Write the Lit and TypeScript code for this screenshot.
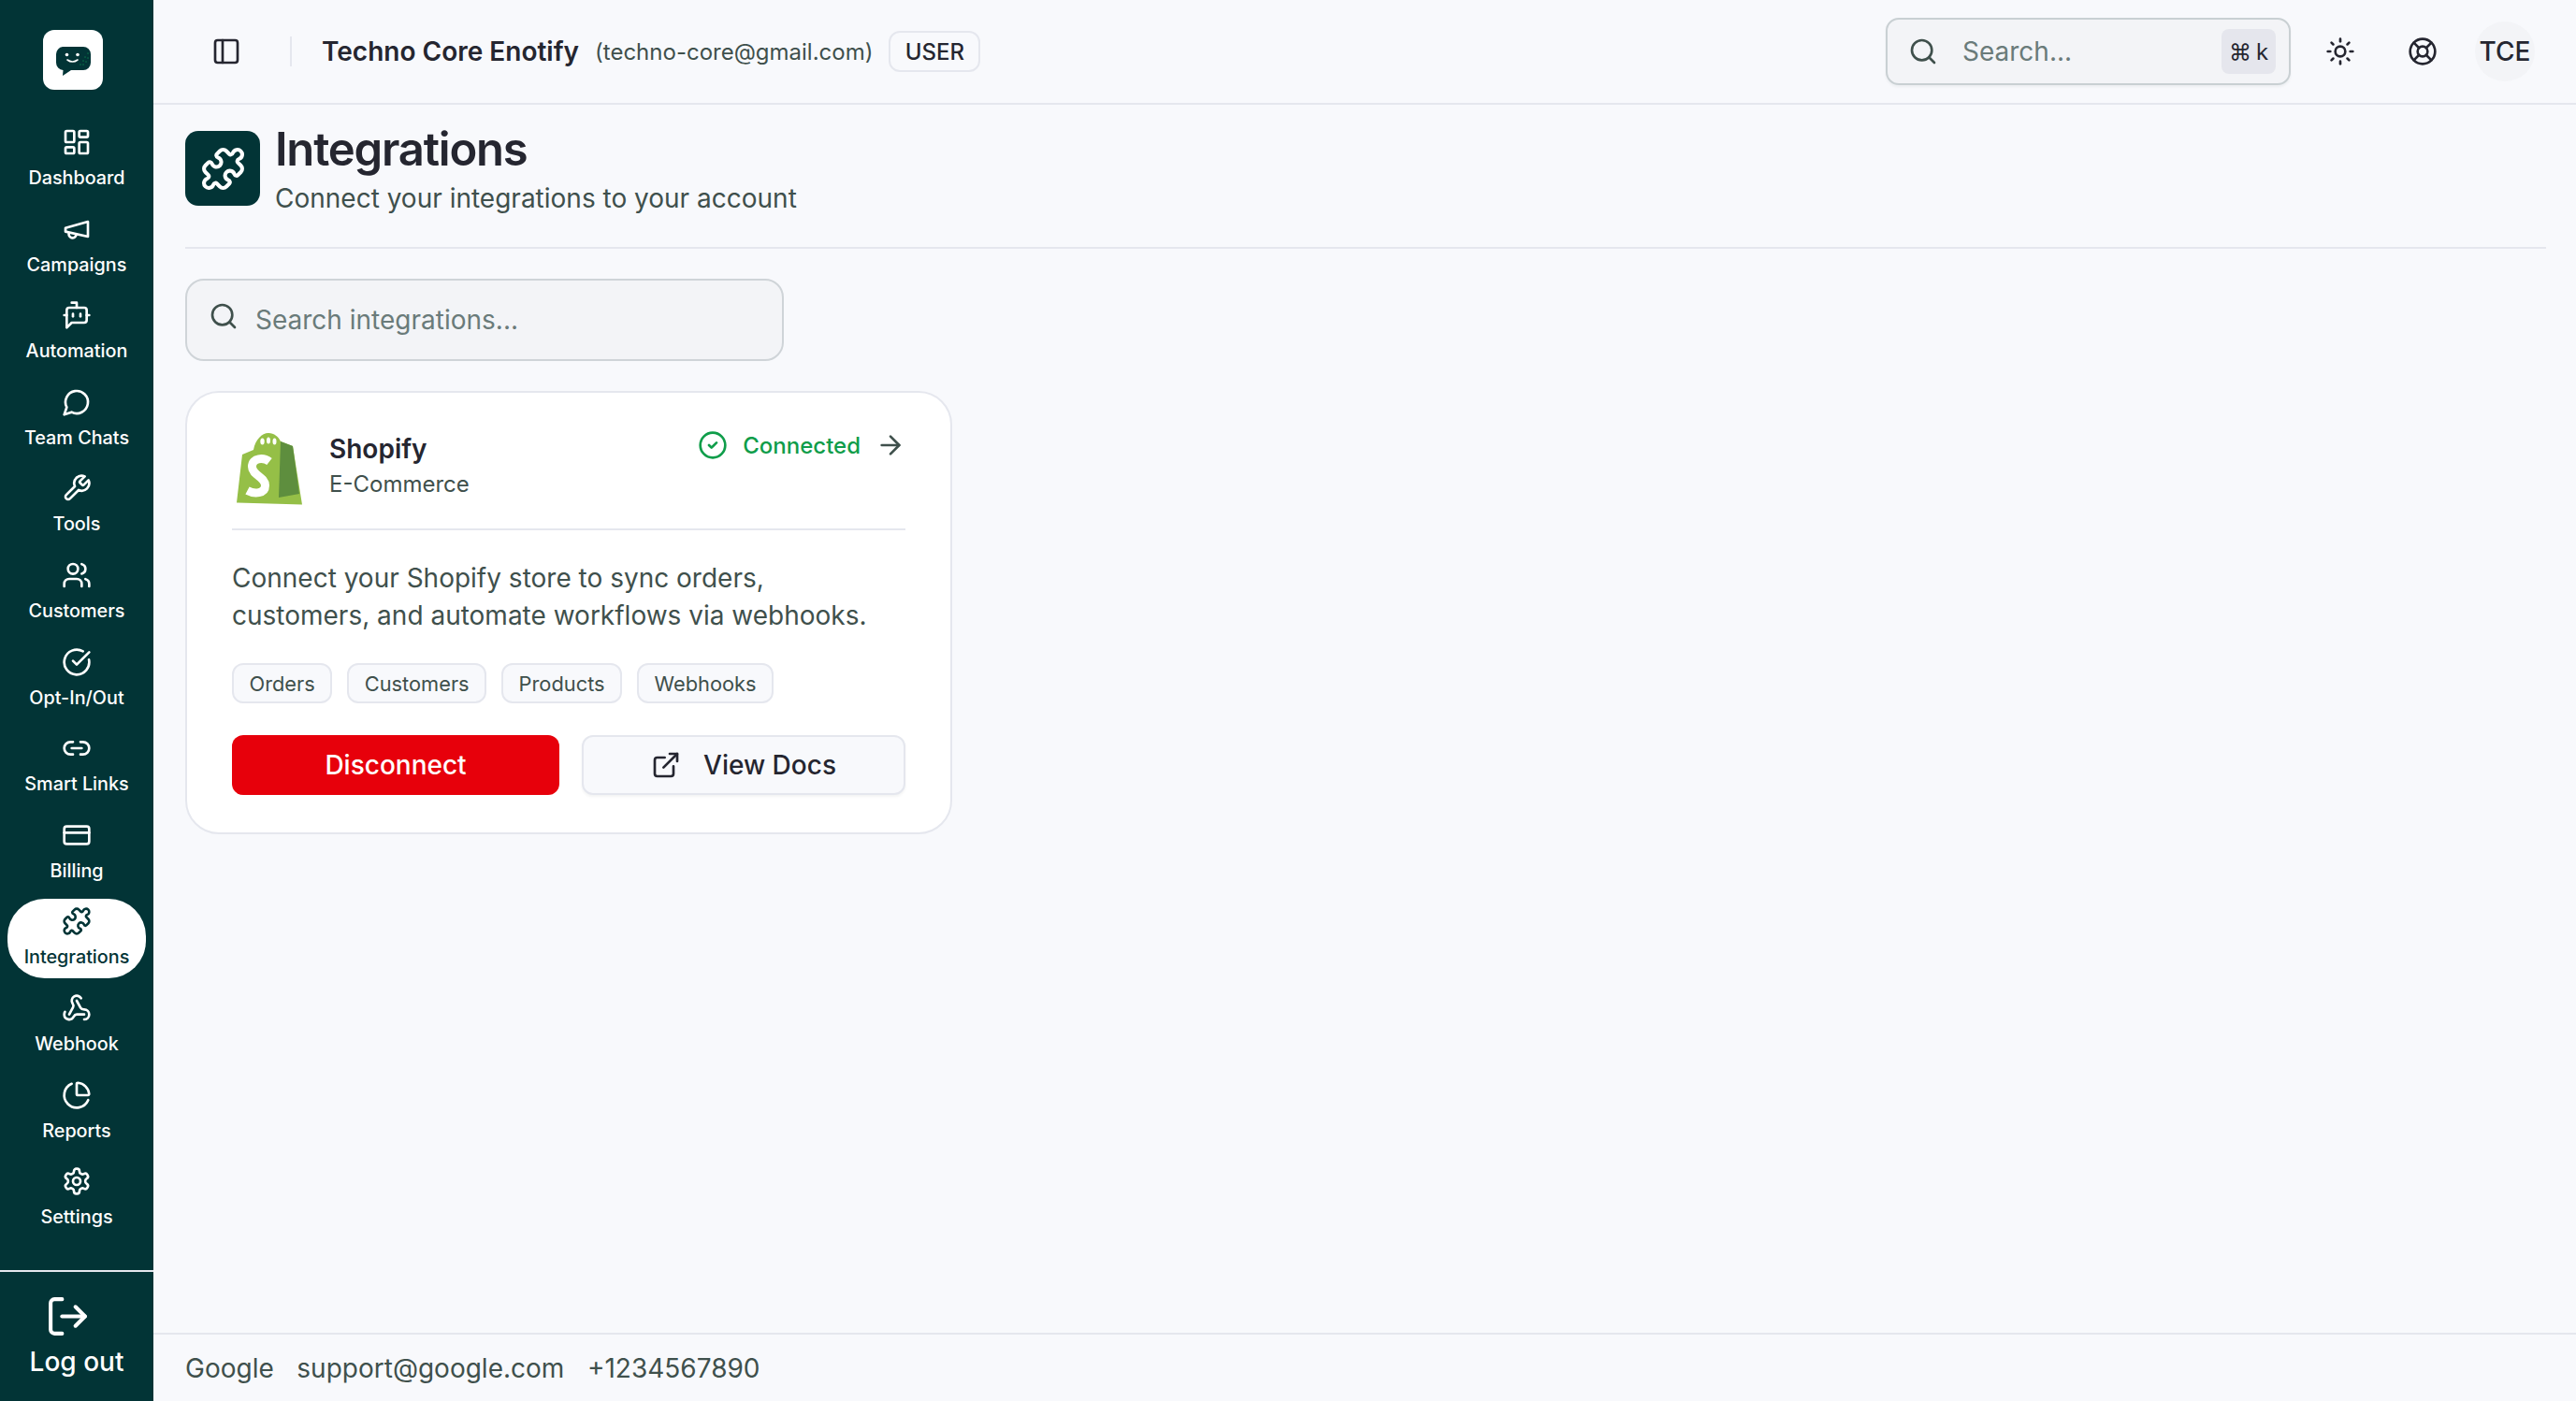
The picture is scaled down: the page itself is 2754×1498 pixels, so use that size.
import { css, html, LitElement, svg } from 'lit';
import { customElement } from 'lit/decorators.js';

// lucide paths, stroke only
const ICONS = {
  dashboard: svg`<rect x="3" y="3" width="7" height="9" rx="1"/><rect x="14" y="3" width="7" height="5" rx="1"/><rect x="14" y="12" width="7" height="9" rx="1"/><rect x="3" y="16" width="7" height="5" rx="1"/>`,
  megaphone: svg`<path d="m3 11 18-5v12L3 14v-3z"/><path d="M11.6 16.8a3 3 0 1 1-5.8-1.6"/>`,
  bot: svg`<path d="M12 6V2H8"/><path d="m8 18-4 4V8a2 2 0 0 1 2-2h12a2 2 0 0 1 2 2v8a2 2 0 0 1-2 2Z"/><path d="M2 12h2"/><path d="M9 11v2"/><path d="M15 11v2"/><path d="M20 12h2"/>`,
  chat: svg`<path d="M7.9 20A9 9 0 1 0 4 16.1L2 22Z"/>`,
  wrench: svg`<path d="M14.7 6.3a1 1 0 0 0 0 1.4l1.6 1.6a1 1 0 0 0 1.4 0l3.77-3.77a6 6 0 0 1-7.94 7.94l-6.91 6.91a2.12 2.12 0 0 1-3-3l6.91-6.91a6 6 0 0 1 7.94-7.94l-3.76 3.76z"/>`,
  users: svg`<path d="M16 21v-2a4 4 0 0 0-4-4H6a4 4 0 0 0-4 4v2"/><circle cx="9" cy="7" r="4"/><path d="M22 21v-2a4 4 0 0 0-3-3.87"/><path d="M16 3.13a4 4 0 0 1 0 7.75"/>`,
  optin: svg`<path d="M21.801 10A10 10 0 1 1 17 3.335"/><path d="m9 11 3 3L22 4"/>`,
  link: svg`<path d="M9 17H7A5 5 0 0 1 7 7h2"/><path d="M15 7h2a5 5 0 1 1 0 10h-2"/><line x1="8" x2="16" y1="12" y2="12"/>`,
  card: svg`<rect width="20" height="14" x="2" y="5" rx="2"/><line x1="2" x2="22" y1="10" y2="10"/>`,
  puzzle: svg`<path d="M19.439 7.85c-.049.322.059.648.289.878l1.568 1.568c.47.47.706 1.087.706 1.704s-.235 1.233-.706 1.704l-1.611 1.611a.98.98 0 0 1-.837.276c-.47-.07-.802-.48-.968-.925a2.501 2.501 0 1 0-3.214 3.214c.446.166.855.497.925.968a.979.979 0 0 1-.276.837l-1.61 1.61a2.404 2.404 0 0 1-1.705.707 2.402 2.402 0 0 1-1.704-.706l-1.568-1.568a1.026 1.026 0 0 0-.877-.29c-.493.074-.84.504-1.02.968a2.5 2.5 0 1 1-3.237-3.237c.464-.18.894-.527.967-1.02a1.026 1.026 0 0 0-.289-.877l-1.568-1.568A2.402 2.402 0 0 1 1.998 12c0-.617.236-1.234.706-1.704L4.23 8.77c.24-.24.581-.353.917-.303.515.077.877.528 1.073 1.01a2.5 2.5 0 1 0 3.259-3.259c-.482-.196-.933-.558-1.01-1.073-.05-.336.062-.676.303-.917l1.525-1.525A2.402 2.402 0 0 1 12 1.998c.617 0 1.234.236 1.704.706l1.568 1.568c.23.23.556.338.877.29.493-.074.84-.504 1.02-.968a2.5 2.5 0 1 1 3.237 3.237c-.464.18-.894.527-.967 1.02Z"/>`,
  webhook: svg`<path d="M18 16.98h-5.99c-1.1 0-1.95.94-2.48 1.9A4 4 0 0 1 2 17c.01-.7.2-1.4.57-2"/><path d="m6 17 3.13-5.78c.53-.97.1-2.18-.5-3.1a4 4 0 1 1 6.89-4.06"/><path d="m12 6 3.13 5.73C15.66 12.7 16.9 13 18 13a4 4 0 0 1 0 8"/>`,
  pie: svg`<path d="M21 12c.552 0 1.005-.449.95-.998a10 10 0 0 0-8.953-8.951c-.55-.055-.998.398-.998.95v8a1 1 0 0 0 1 1z"/><path d="M21.21 15.89A10 10 0 1 1 8 2.83"/>`,
  settings: svg`<path d="M12.22 2h-.44a2 2 0 0 0-2 2v.18a2 2 0 0 1-1 1.73l-.43.25a2 2 0 0 1-2 0l-.15-.08a2 2 0 0 0-2.73.73l-.22.38a2 2 0 0 0 .73 2.73l.15.1a2 2 0 0 1 1 1.72v.51a2 2 0 0 1-1 1.74l-.15.09a2 2 0 0 0-.73 2.73l.22.38a2 2 0 0 0 2.73.73l.15-.08a2 2 0 0 1 2 0l.43.25a2 2 0 0 1 1 1.73V20a2 2 0 0 0 2 2h.44a2 2 0 0 0 2-2v-.18a2 2 0 0 1 1-1.73l.43-.25a2 2 0 0 1 2 0l.15.08a2 2 0 0 0 2.73-.73l.22-.39a2 2 0 0 0-.73-2.73l-.15-.08a2 2 0 0 1-1-1.74v-.5a2 2 0 0 1 1-1.74l.15-.09a2 2 0 0 0 .73-2.73l-.22-.38a2 2 0 0 0-2.73-.73l-.15.08a2 2 0 0 1-2 0l-.43-.25a2 2 0 0 1-1-1.73V4a2 2 0 0 0-2-2z"/><circle cx="12" cy="12" r="3"/>`,
  logout: svg`<path d="M9 21H5a2 2 0 0 1-2-2V5a2 2 0 0 1 2-2h4"/><polyline points="16 17 21 12 16 7"/><line x1="21" x2="9" y1="12" y2="12"/>`,
  panel: svg`<rect width="18" height="18" x="3" y="3" rx="2"/><path d="M9 3v18"/>`,
  search: svg`<circle cx="11" cy="11" r="8"/><path d="m21 21-4.3-4.3"/>`,
  sun: svg`<circle cx="12" cy="12" r="4"/><path d="M12 2v2"/><path d="M12 20v2"/><path d="m4.93 4.93 1.41 1.41"/><path d="m17.66 17.66 1.41 1.41"/><path d="M2 12h2"/><path d="M20 12h2"/><path d="m6.34 17.66-1.41 1.41"/><path d="m19.07 4.93-1.41 1.41"/>`,
  buoy: svg`<circle cx="12" cy="12" r="10"/><path d="m4.93 4.93 4.24 4.24"/><path d="m14.83 9.17 4.24-4.24"/><path d="m14.83 14.83 4.24 4.24"/><path d="m9.17 14.83-4.24 4.24"/><circle cx="12" cy="12" r="4"/>`,
  check: svg`<circle cx="12" cy="12" r="10"/><path d="m9 12 2 2 4-4"/>`,
  arrow: svg`<path d="M5 12h14"/><path d="m12 5 7 7-7 7"/>`,
  external: svg`<path d="M15 3h6v6"/><path d="M10 14 21 3"/><path d="M18 13v6a2 2 0 0 1-2 2H5a2 2 0 0 1-2-2V8a2 2 0 0 1 2-2h6"/>`,
};

type IconName = keyof typeof ICONS;

const icon = (name: IconName, cls = '') => html`<svg
  class="icon ${cls}"
  viewBox="0 0 24 24"
  fill="none"
  stroke="currentColor"
  stroke-width="2"
  stroke-linecap="round"
  stroke-linejoin="round"
  aria-hidden="true"
>${ICONS[name]}</svg>`;

const NAV: { label: string; icon: IconName; active?: boolean }[] = [
  { label: 'Dashboard', icon: 'dashboard' },
  { label: 'Campaigns', icon: 'megaphone' },
  { label: 'Automation', icon: 'bot' },
  { label: 'Team Chats', icon: 'chat' },
  { label: 'Tools', icon: 'wrench' },
  { label: 'Customers', icon: 'users' },
  { label: 'Opt-In/Out', icon: 'optin' },
  { label: 'Smart Links', icon: 'link' },
  { label: 'Billing', icon: 'card' },
  { label: 'Integrations', icon: 'puzzle', active: true },
  { label: 'Webhook', icon: 'webhook' },
  { label: 'Reports', icon: 'pie' },
  { label: 'Settings', icon: 'settings' },
];

const TAGS = ['Orders', 'Customers', 'Products', 'Webhooks'];

@customElement('app-root')
export class AppRoot extends LitElement {
  static override styles = css`
    :host {
      display: flex;
      height: 100vh;
      background: #f8f9fc;
      color: #252630;
      font-family: Inter, 'Liberation Sans', sans-serif;
      overflow: hidden;
    }
    * {
      box-sizing: border-box;
    }
    .icon {
      display: block;
      width: 32px;
      height: 32px;
      flex: none;
    }

    /* sidebar */
    .sidebar {
      width: 164px;
      flex: none;
      display: flex;
      flex-direction: column;
      background: #023436;
      color: #fff;
    }
    .logo {
      display: block;
      width: 64px;
      height: 64px;
      margin: 32px auto 32px 46px;
    }
    .nav {
      display: flex;
      flex-direction: column;
      gap: 8.1px;
      padding: 0 8px;
    }
    .nav-item {
      height: 84.5px;
      display: flex;
      flex-direction: column;
      align-items: center;
      gap: 8px;
      padding-top: 8px;
      border-radius: 40px;
      font-size: 19.8px;
      font-weight: 500;
      line-height: 28px;
      white-space: nowrap;
    }
    .nav-item.active {
      background: #fff;
      color: #023436;
    }
    .logout {
      margin-top: auto;
      height: 140px;
      border-top: 2px solid #e5e7ee;
      display: flex;
      flex-direction: column;
      align-items: center;
      padding-top: 23px;
      font-size: 28px;
      font-weight: 500;
      line-height: 36px;
      gap: 6px;
    }
    .logout .icon {
      width: 49px;
      height: 49px;
      margin-right: 20px;
    }

    /* main column */
    .main {
      flex: 1;
      min-width: 0;
      display: flex;
      flex-direction: column;
    }
    .topbar {
      height: 112px;
      flex: none;
      display: flex;
      align-items: center;
      border-bottom: 2px solid #e5e7ee;
      padding: 0 44px 0 62px;
    }
    .panel-toggle {
      width: 32px;
      height: 32px;
      color: #252630;
    }
    .vr {
      width: 2px;
      height: 32px;
      background: #e5e7ee;
      margin: 0 32px 0 52px;
    }
    .account {
      font-size: 28px;
      font-weight: 600;
      white-space: nowrap;
    }
    .email {
      font-size: 24px;
      color: #3f504c;
      margin-left: 17px;
      white-space: nowrap;
    }
    .role {
      margin-left: 17px;
      height: 44px;
      width: 98px;
      display: flex;
      align-items: center;
      justify-content: center;
      border: 2px solid #e5e7ee;
      border-radius: 12px;
      font-size: 24px;
      font-weight: 500;
    }
    .global-search {
      margin-left: auto;
      width: 433px;
      height: 72px;
      display: flex;
      align-items: center;
      padding: 0 14px 0 22px;
      background: #f3f4f7;
      border: 2px solid #c9d0d3;
      border-radius: 14px;
      box-shadow: 0 2px 3px rgba(20, 30, 40, 0.05);
      font-size: 28px;
      color: #6a7b7a;
    }
    .global-search .icon {
      color: #3f504c;
      margin-right: 26px;
    }
    .kbd {
      margin-left: auto;
      width: 58px;
      height: 48px;
      display: flex;
      align-items: center;
      justify-content: center;
      gap: 5px;
      background: #e5e6ed;
      border-radius: 8px;
      color: #252630;
      font-size: 24px;
    }
    .top-btn {
      margin-left: 37px;
      color: #252630;
    }
    .top-btn + .top-btn {
      margin-left: 56px;
    }
    .avatar {
      margin-left: 40px;
      width: 64px;
      height: 64px;
      border-radius: 50%;
      background: #f3f4f7;
      display: flex;
      align-items: center;
      justify-content: center;
      font-size: 28px;
      font-weight: 500;
    }

    .content {
      flex: 1;
      padding: 28px 32px 0 34px;
    }
    .page-head {
      display: flex;
      gap: 16px;
      height: 126px;
      border-bottom: 2px solid #e5e7ee;
    }
    .tile {
      width: 80px;
      height: 80px;
      border-radius: 14px;
      background: #023436;
      color: #fff;
      display: flex;
      align-items: center;
      justify-content: center;
    }
    .tile .icon {
      width: 49px;
      height: 49px;
    }
    .titles {
      margin-top: -6px;
    }
    h1 {
      margin: 0;
      font-size: 49px;
      font-weight: 600;
      line-height: 52px;
      letter-spacing: -1.2px;
    }
    .subtitle {
      margin-top: 2px;
      font-size: 28px;
      line-height: 48px;
      color: #3f504c;
    }
    .filter {
      margin-top: 32px;
      width: 640px;
      height: 88px;
      display: flex;
      align-items: center;
      gap: 18px;
      padding: 0 23px;
      background: #f3f4f7;
      border: 2px solid #cfd4d8;
      border-radius: 20px;
      font-size: 28px;
      color: #6a7b7a;
    }
    .filter .icon {
      color: #3f504c;
      margin-top: -8px;
    }

    /* integration card */
    .card {
      margin-top: 32px;
      width: 820px;
      height: 474px;
      padding: 42px 48px 0;
      background: #fff;
      border: 2px solid #e5e7ee;
      border-radius: 36px;
      display: flex;
      flex-direction: column;
    }
    .card-head {
      display: flex;
      height: 105px;
      border-bottom: 2px solid #e5e7ee;
    }
    .brand {
      width: 120px;
      height: 110px;
      margin: -22px 2px 0 -18px;
      flex: none;
    }
    .brand-text {
      margin-top: -2px;
    }
    .name {
      font-size: 28px;
      font-weight: 600;
      line-height: 40px;
    }
    .kind {
      font-size: 24px;
      line-height: 35px;
      color: #3f504c;
    }
    .status {
      margin-left: auto;
      display: flex;
      align-items: center;
      align-self: flex-start;
      height: 32px;
      margin-top: -2px;
      color: #0f9d4a;
      font-size: 24px;
      font-weight: 500;
    }
    .status .arrow {
      color: #3f504c;
      margin-left: 16px;
    }
    .status .check {
      margin-right: 16px;
    }
    .desc {
      margin: 31px 0 0;
      font-size: 28px;
      line-height: 40px;
      color: #3f504c;
    }
    .tags {
      display: flex;
      gap: 16px;
      margin-top: 31px;
    }
    .tag {
      height: 43px;
      display: flex;
      align-items: center;
      padding: 0 16.5px;
      background: #f8f9fc;
      border: 2px solid #e5e7ee;
      border-radius: 12px;
      font-size: 21.8px;
      color: #3f504c;
    }
    .actions {
      display: flex;
      gap: 24px;
      margin-top: 34px;
    }
    .btn {
      height: 64px;
      display: flex;
      align-items: center;
      justify-content: center;
      border-radius: 12px;
      font-size: 28px;
      font-weight: 500;
    }
    .btn.danger {
      width: 350px;
      background: #e7000b;
      color: #fff;
    }
    .btn.outline {
      flex: 1;
      gap: 24px;
      background: #f8f9fc;
      border: 2px solid #e5e7ee;
      box-shadow: 0 2px 3px rgba(20, 30, 40, 0.05);
      color: #252630;
    }

    .footer {
      height: 73px;
      flex: none;
      display: flex;
      align-items: center;
      gap: 24.6px;
      padding: 0 34px;
      border-top: 2px solid #e5e7ee;
      font-size: 28px;
      color: #3f504c;
    }
  `;

  override render() {
    return html`
      <aside class="sidebar">
        <svg class="logo" viewBox="0 0 64 64" aria-hidden="true">
          <rect width="64" height="64" rx="12" fill="#fff" />
          <path
            d="M21 18h22a8 8 0 0 1 8 8v9a8 8 0 0 1-8 8H30l-9 6 .5-6A8 8 0 0 1 14 35v-9a8 8 0 0 1 7-8z"
            fill="#023436"
          />
          <circle cx="25.5" cy="26.5" r="1.8" fill="#fff" />
          <circle cx="37" cy="26.5" r="1.8" fill="#fff" />
          <path d="M26 32q5.500 4 11 0" fill="none" stroke="#fff" stroke-width="1.6" stroke-linecap="round" />
          <path d="M48 25v.1M45 29v.1M48 30v.1M43 33v.1M46 34v.1M40 37v.1M43 37v.1" stroke="#14b85c" stroke-width="1" stroke-linecap="round" />
        </svg>
        <nav class="nav">
          ${NAV.map(
            (n) => html`<div class="nav-item ${n.active ? 'active' : ''}">
              ${icon(n.icon)}<span>${n.label}</span>
            </div>`,
          )}
        </nav>
        <div class="logout">${icon('logout')}<span>Log out</span></div>
      </aside>

      <div class="main">
        <header class="topbar">
          ${icon('panel', 'panel-toggle')}
          <div class="vr"></div>
          <span class="account">Techno Core Enotify</span>
          <span class="email">(techno-core@gmail.com)</span>
          <span class="role">USER</span>
          <div class="global-search">
            ${icon('search')}<span>Search...</span>
            <span class="kbd"><span>⌘</span><span>k</span></span>
          </div>
          ${icon('sun', 'top-btn')} ${icon('buoy', 'top-btn')}
          <div class="avatar">TCE</div>
        </header>

        <main class="content">
          <div class="page-head">
            <div class="tile">${icon('puzzle')}</div>
            <div class="titles">
              <h1>Integrations</h1>
              <div class="subtitle">Connect your integrations to your account</div>
            </div>
          </div>

          <div class="filter">${icon('search')}<span>Search integrations...</span></div>

          <section class="card">
            <div class="card-head">
              <svg class="brand" viewBox="0 0 120 110" aria-hidden="true">
                <path d="M23 97.500 29 46l12-5c2-11 9-18 16-18 6 0 11 4 13 9l13 5 10 62.500z" fill="#95bf47" />
                <path d="M70 32l13 5 7 51-22 4z" fill="#5e8e3e" />
                <ellipse cx="50.500" cy="32" rx="2.200" ry="3.500" fill="#fff" />
                <ellipse cx="57" cy="31" rx="2" ry="3.500" fill="#fff" />
                <ellipse cx="63.500" cy="32" rx="2" ry="3.500" fill="#fff" />
                <path d="M58 53.500C52 49 39.500 49 39.500 59c0 9 14 11 14 20 0 9-11.500 9.500-19 5.500" fill="none" stroke="#fff" stroke-width="9" />
              </svg>
              <div class="brand-text">
                <div class="name">Shopify</div>
                <div class="kind">E-Commerce</div>
              </div>
              <div class="status">
                ${icon('check', 'check')}<span>Connected</span>${icon('arrow', 'arrow')}
              </div>
            </div>
            <p class="desc">
              Connect your Shopify store to sync orders,<br />customers, and automate workflows via
              webhooks.
            </p>
            <div class="tags">${TAGS.map((t) => html`<span class="tag">${t}</span>`)}</div>
            <div class="actions">
              <div class="btn danger">Disconnect</div>
              <div class="btn outline">${icon('external')}<span>View Docs</span></div>
            </div>
          </section>
        </main>

        <footer class="footer">
          <span>Google</span><span>support@google.com</span><span>+1234567890</span>
        </footer>
      </div>
    `;
  }
}
